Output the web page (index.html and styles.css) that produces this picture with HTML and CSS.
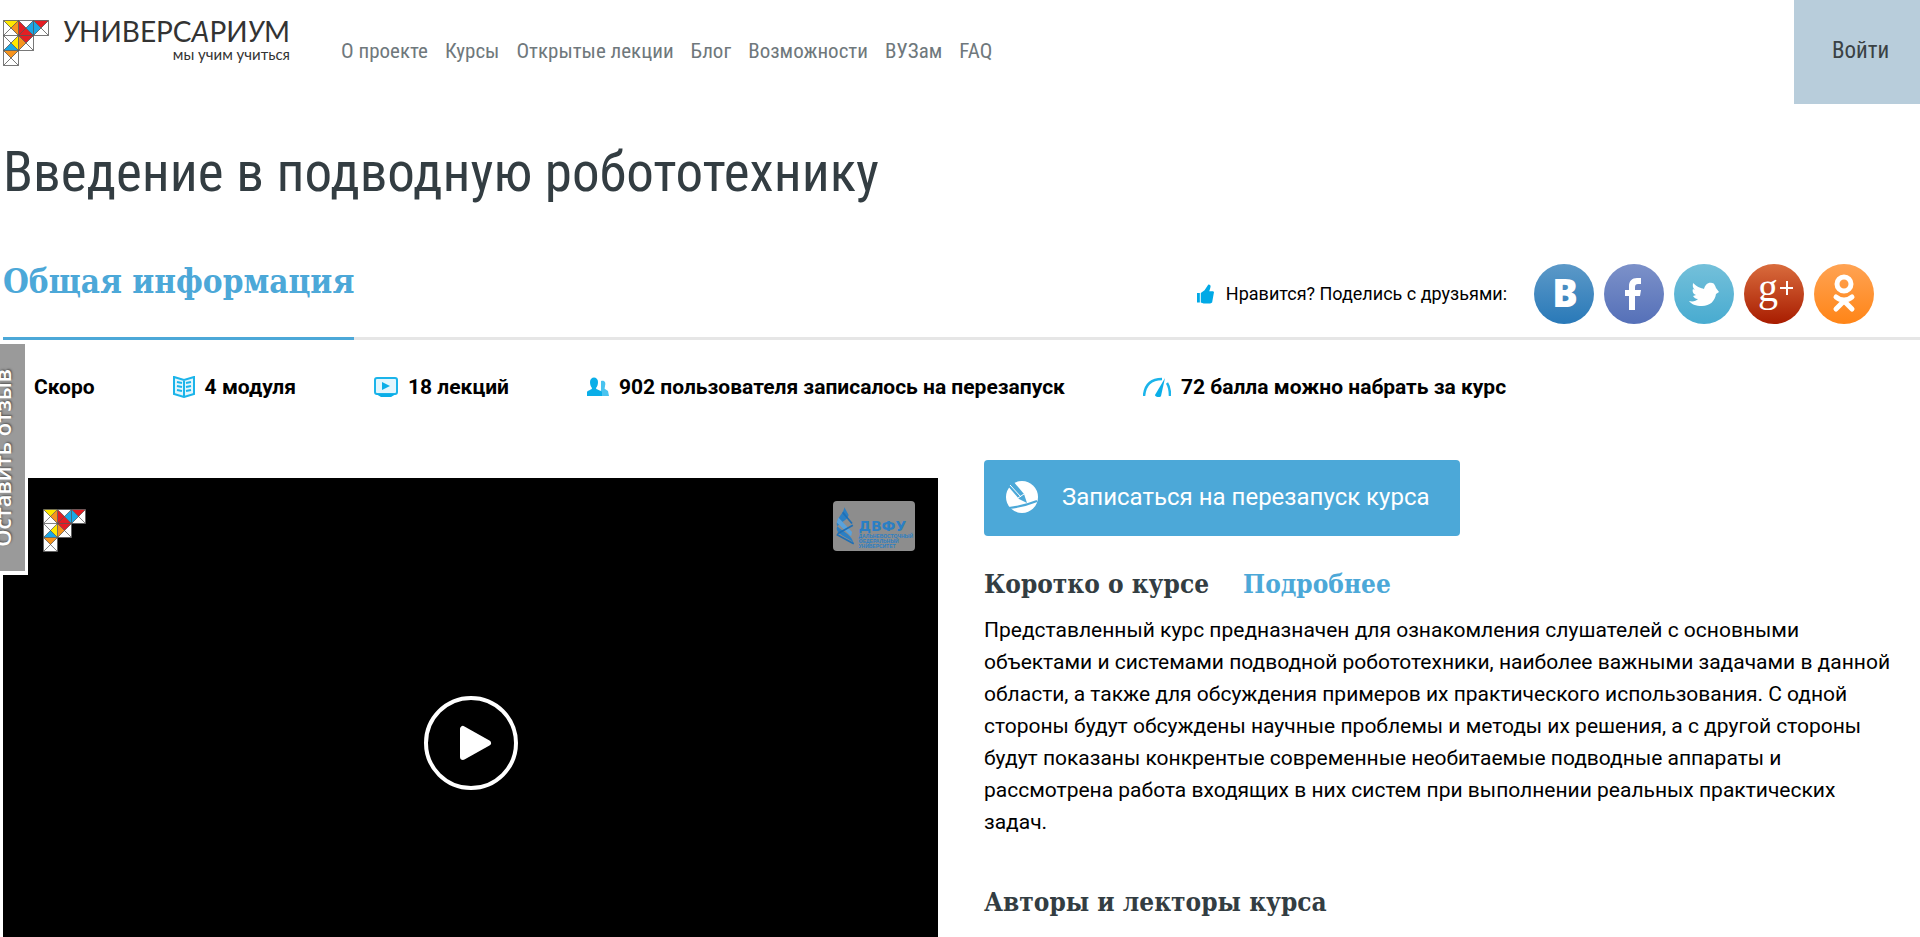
FILE: index.html
```html
<!DOCTYPE html>
<html lang="ru">
<head>
<meta charset="utf-8">
<title>Введение в подводную робототехнику</title>
<link rel="stylesheet" href="styles.css">
</head>
<body>
<svg class="defs" aria-hidden="true">
  <symbol id="emblem" viewBox="-1 -1 92 92">
    <path fill="#fff" d="M0 0H90V30H60V60H30V90H0Z"/>
    <path fill="#ffe800" d="M0 0H30L15 15ZM30 30L15 45L30 60Z"/>
    <path fill="#f7941e" d="M30 0V30L15 15ZM30 30V60L45 45ZM0 60H30L15 75Z"/>
    <path fill="#e31e24" d="M30 0L60 30L45 45L30 30ZM60 0H90L75 15Z"/>
    <path fill="#1ba7e5" d="M60 0L75 15L60 30L45 15ZM0 60L15 45L30 60Z"/>
    <path fill="none" stroke="#555" stroke-width="1.6" d="M0 0H90V30H60V60H30V90H0ZM0 30H60M0 60H30M30 0V60M60 0V30M0 0L60 60M0 30L30 60M0 60L30 90M30 0L60 30M60 0L90 30M0 30L30 0M0 60L60 0M0 90L90 0"/>
  </symbol>
</svg>

<header class="header">
  <a class="logo" href="#">
    <svg class="logo-mark" aria-hidden="true"><use href="#emblem"/></svg>
    <span class="logo-text">
      <span class="logo-name"><i>У</i>НИВЕРС<i>А</i>РИ<i>У</i>М</span>
      <span class="logo-slogan">мы учим учиться</span>
    </span>
  </a>
  <nav class="nav">
    <a href="#">О проекте</a>
    <a href="#">Курсы</a>
    <a href="#">Открытые лекции</a>
    <a href="#">Блог</a>
    <a href="#">Возможности</a>
    <a href="#">ВУЗам</a>
    <a href="#">FAQ</a>
  </nav>
  <a class="login" href="#">Войти</a>
</header>

<main class="page">
  <h1 class="title">Введение в подводную робототехнику</h1>

  <div class="tabs">
    <a class="tab" href="#">Общая информация</a>
    <div class="share">
      <svg class="thumb" viewBox="0 0 18 20" aria-hidden="true"><path fill="#00a9e6" d="M0 9h3v10H0zM4 9l4-3 4-6c2 0 3 1 2 4l-1 3h4l1 1-2 11-2 1H7l-3-1z"/></svg>
      <span class="share-label">Нравится? Поделись с друзьями:</span>
      <div class="socials">
        <a class="social vk" href="#" aria-label="ВКонтакте"><svg viewBox="0 0 60 60"><text class="glyph-b" x="31" y="43" text-anchor="middle">B</text></svg></a>
        <a class="social fb" href="#" aria-label="Facebook"><svg viewBox="0 0 60 60"><path fill="#fff" d="M25 46V32h-4v-6h4v-4c0-5 3-8 8-8h4v6h-3c-2 0-3 1-3 3v3h6l-1 6h-5v14z"/></svg></a>
        <a class="social tw" href="#" aria-label="Twitter"><svg viewBox="0 0 60 60"><path fill="#fff" d="M15 37C19 38 22 37 24 35C21 35 20 33 19 32L22 31C19 30 18 27 19 25L21 26C18 23 19 21 19 19C23 23 27 24 30 25C31 21 34 18 38 19C40 19 41 21 42 24L45 28L42 30C41 37 36 42 28 42C22 42 17 40 15 37Z"/></svg></a>
        <a class="social gp" href="#" aria-label="Google Plus"><svg viewBox="0 0 60 60"><text class="glyph-g" x="14" y="37">g</text><path stroke="#fff" stroke-width="2" d="M36 24h13M43 17v14"/></svg></a>
        <a class="social ok" href="#" aria-label="Одноклассники"><svg viewBox="0 0 60 60"><g fill="none" stroke="#fff" stroke-width="5" stroke-linecap="round"><circle cx="30" cy="20" r="7"/><path d="M22 33c5 4 11 4 16 0M30 37L22 45M30 37L38 45"/></g></svg></a>
      </div>
    </div>
  </div>

  <ul class="stats">
    <li>Скоро</li>
    <li><svg class="stat-icon" viewBox="0 0 22 22" aria-hidden="true"><path fill="#e3f6fd" stroke="#1bb4ea" stroke-width="2" d="M1 1l10 3 10-3v17l-10 3-10-3zM11 4v17M4 6l5 1M4 10l5 1M4 14l5 1M18 6l-5 1M18 10l-5 1M18 14l-5 1"/></svg>4 модуля</li>
    <li><svg class="stat-icon" viewBox="0 0 24 22" aria-hidden="true"><rect x="1" y="2" width="22" height="16" rx="2" fill="#e3f6fd" stroke="#1bb4ea" stroke-width="2"/><path fill="#0aaee8" d="M8 6l8 4-8 4zM2 18h20l-5 3H7z"/></svg>18 лекций</li>
    <li><svg class="stat-icon low" viewBox="0 0 22 20" aria-hidden="true"><path fill="#49c3ef" d="M14 4c4-1 5 2 4 5 0 2-1 2 0 3l3 2 1 5h-8z"/><path fill="#0aaee8" d="M3 5c0-6 8-6 8 0 0 3-1 5-2 6 0 2 5 2 6 4v4H0v-4c1-2 5-2 5-4-1-1-2-3-2-6z"/></svg>902 пользователя записалось на перезапуск</li>
    <li><svg class="stat-icon low" viewBox="0 0 28 20" aria-hidden="true"><path fill="none" stroke="#1bb4ea" stroke-width="2.5" d="M1 19C2 7 9 2 19 2M24 6c2 3 3 7 3 13"/><path fill="#0aaee8" d="M22 1l-4 18c-1 2-6 1-6-1z"/></svg>72 балла можно набрать за курс</li>
  </ul>

  <div class="columns">
    <section class="video" aria-label="Видео">
      <svg class="video-mark" aria-hidden="true"><use href="#emblem"/></svg>
      <button class="play" type="button" aria-label="Смотреть"><svg viewBox="0 0 94 94"><circle cx="47" cy="47" r="45" fill="none" stroke="#fff" stroke-width="4"/><path fill="#fff" stroke="#fff" stroke-width="6" stroke-linejoin="round" d="M39 33v28l25-14z"/></svg></button>
      <div class="partner">
        <svg viewBox="0 0 24 46" aria-hidden="true"><path fill="#2b7fc4" d="M11 1c-1 8-9 12-9 20 0 6 18 10 20 23-2-6-20-10-20-18 0-6 13-9 14-16z"/><path fill="#5aa2dc" d="M4 13l16 17-1 5L2 19z"/><path fill="none" stroke="#1f6fb5" stroke-width="2" d="M9 7l11 13M21 22L3 32M2 33l20 11"/></svg>
        <span class="partner-text"><b>ДВФУ</b><span>ДАЛЬНЕВОСТОЧНЫЙ<br>ФЕДЕРАЛЬНЫЙ<br>УНИВЕРСИТЕТ</span></span>
      </div>
    </section>

    <section class="about">
      <button class="enroll" type="button"><svg class="enroll-icon" viewBox="0 0 32 32" aria-hidden="true"><circle cx="16" cy="16" r="16" fill="#fff"/><path fill="#4ca8d8" d="M1 4l6-4 11 13 3 9-8-4z"/><path stroke="#fff" stroke-width="1" fill="none" d="M4 4l11 12M12 17l6-4"/><path stroke="#4ca8d8" stroke-width="2" fill="none" d="M3 27c9-1 18-3 28-7"/></svg>Записаться на перезапуск курса</button>
      <div class="about-head">
        <h2>Коротко о курсе</h2>
        <a class="more" href="#">Подробнее</a>
      </div>
      <p class="about-text">Представленный курс предназначен для ознакомления слушателей с основными объектами и системами подводной робототехники, наиболее важными задачами в данной области, а также для обсуждения примеров их практического использования. С одной стороны будут обсуждены научные проблемы и методы их решения, а с другой стороны будут показаны конкрентые современные необитаемые подводные аппараты и рассмотрена работа входящих в них систем при выполнении реальных практических задач.</p>
      <h2>Авторы и лекторы курса</h2>
    </section>
  </div>
</main>

<button class="feedback" type="button"><span>Оставить отзыв</span></button>
</body>
</html>
```
FILE: styles.css
```css
* { box-sizing: border-box; }

html, body { height: 100%; }

body {
  margin: 0;
  display: flex;
  flex-direction: column;
  overflow: hidden;
  background: #fff;
  color: #000;
  font-family: Roboto, "Liberation Sans", sans-serif;
  font-size: 21px;
}

a { color: inherit; text-decoration: none; }
h1, h2, p, ul { margin: 0; padding: 0; }
button { border: 0; font: inherit; cursor: pointer; }

.defs { position: absolute; width: 0; height: 0; }

.header {
  display: flex;
  align-items: flex-start;
  font-family: "Roboto Condensed", "Liberation Sans Narrow", Roboto, sans-serif;
  font-size: 21px;
}

.logo { display: flex; width: 290px; padding: 16px 0 0 3px; color: #333; }
.logo-mark { flex: none; width: 46px; height: 46px; margin-top: 4px; }
.logo-text { display: flex; flex: 1; flex-direction: column; align-items: flex-end; font-family: Lato, "Open Sans", sans-serif; white-space: nowrap; }
.logo-name { font-size: 28px; line-height: 30px; }
.logo-slogan { font-size: 15px; line-height: 16px; }

.nav { display: flex; gap: 17px; margin-left: 51px; line-height: 102px; color: #6f787c; }
.login { margin-left: auto; width: 126px; line-height: 102px; padding: 0 0 2px 38px; background: #b8cddb; color: #3a4144; font-size: 23px; }

.page { flex: 1; display: flex; flex-direction: column; padding-left: 3px; min-height: 0; }

.title {
  padding-top: 34px;
  font-family: "Roboto Condensed", "Liberation Sans Narrow", Roboto, sans-serif;
  font-size: 55px;
  line-height: 68px;
  font-weight: 400;
  color: #333d42;
}

.tabs { display: flex; justify-content: space-between; align-items: stretch; height: 134px; border-bottom: 3px solid #e6e6e6; }
.tab {
  padding-top: 56px;
  margin-bottom: -3px;
  border-bottom: 3px solid #4ca8d8;
  color: #4ca8d8;
  font: bold 33px/40px "Roboto Slab", "DejaVu Serif Condensed", "DejaVu Serif", serif;
}

.share { display: flex; align-items: center; padding: 44px 46px 0 0; font-size: 18px; }
.thumb { width: 17px; height: 20px; }
.share-label { margin: 0 27px 0 12px; }
.socials { display: flex; gap: 10px; }
.social { width: 60px; height: 60px; border-radius: 50%; }
.social svg { display: block; width: 60px; height: 60px; }
.vk { background: linear-gradient(#5c99c8, #2979b8); }
.fb { background: linear-gradient(#7c91c9, #5570b8); }
.tw { background: linear-gradient(#74c0da, #48abd0); }
.gp { background: linear-gradient(#d96c3d, #a81c00); }
.ok { background: linear-gradient(#ffa353, #ff8517); }
.glyph-b { fill: #fff; font: 800 38px "Open Sans", sans-serif; }
.glyph-g { fill: #fff; font: 40px "Liberation Serif", serif; }

.stats { display: flex; gap: 78px; list-style: none; padding: 31px 0 0 31px; font-weight: 700; line-height: 32px; }
.stats li { display: flex; align-items: center; gap: 10px; white-space: nowrap; }
.stat-icon { height: 22px; }
.stat-icon.low { height: 20px; }

.columns { flex: 1; display: grid; grid-template-columns: 935fr 936fr; gap: 46px; min-height: 0; padding-top: 57px; }

.video { position: relative; display: flex; justify-content: center; margin-top: 18px; background: #000; }
.video-mark { position: absolute; left: 40px; top: 31px; width: 43px; height: 43px; }
.play { align-self: flex-start; margin-top: 218px; padding: 0; background: none; }
.play svg { display: block; width: 94px; height: 94px; }
.partner { position: absolute; right: 23px; top: 23px; display: flex; width: 82px; height: 50px; padding: 2px; border-radius: 4px; background: #8d8d8d; color: #2b7fc4; }
.partner svg { width: 24px; height: 46px; }
.partner-text { display: flex; flex-direction: column; padding: 15px 0 0 3px; font: bold 5px/5px "Liberation Sans", sans-serif; }
.partner-text b { font: bold 14px/16px "DejaVu Sans", sans-serif; }

.enroll { display: flex; align-items: center; height: 76px; padding: 0 30px 2px 22px; border-radius: 4px; background: #4ca8d8; color: #fff; font-size: 24px; }
.enroll-icon { width: 32px; height: 32px; margin-right: 24px; }
.about h2, .more { font: bold 26px/36px "Roboto Slab", "DejaVu Serif Condensed", "DejaVu Serif", serif; color: #333d42; }
.about .more { color: #4ca8d8; }
.about-head { display: flex; gap: 34px; padding: 30px 0 12px; }
.about-text { line-height: 32px; padding: 0 22px 46px 0; }

.feedback {
  position: fixed;
  left: 0;
  top: 344px;
  width: 28px;
  height: 231px;
  padding: 0;
  border: solid #fff;
  border-width: 0 3px 4px 0;
  background: #9a9a9a;
  color: #fff;
  overflow: hidden;
}
.feedback span { display: block; margin-left: -12px; writing-mode: vertical-rl; transform: rotate(180deg); font: 600 22px/28px "Open Sans", sans-serif; text-shadow: 1px 1px 2px #555; }
```
